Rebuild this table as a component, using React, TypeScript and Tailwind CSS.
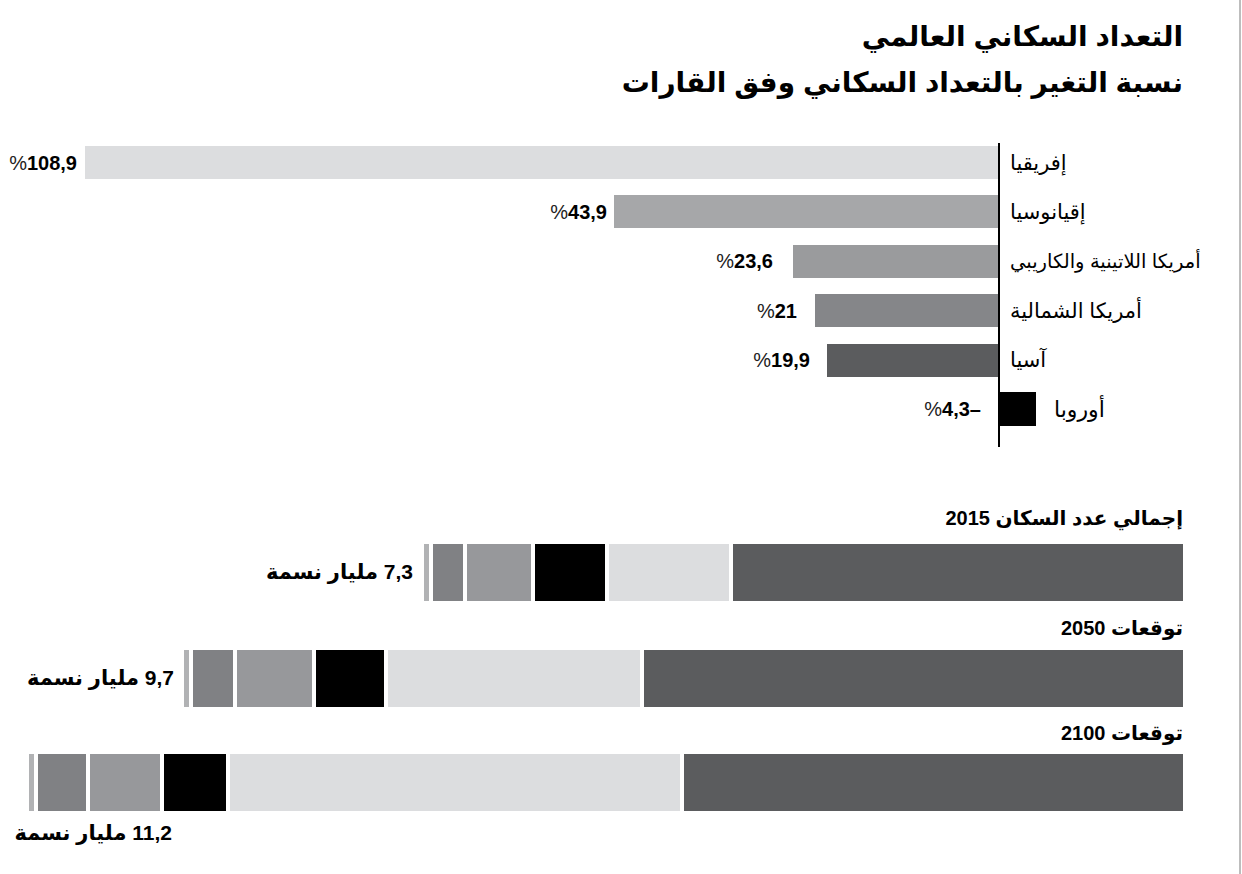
const font = { fontFamily: '"Liberation Sans", "DejaVu Sans", sans-serif' };

type Row = {
  name: string;
  value: string;
  bar: number;
  gap: number;
  color: string;
  small?: boolean;
};

const rows: Row[] = [
  { name: "إفريقيا", value: "108,9", bar: 913, gap: 8, color: "bg-[#dcdddf]" },
  { name: "إقيانوسيا", value: "43,9", bar: 384, gap: 7, color: "bg-[#a6a7a9]" },
  { name: "أمريكا اللاتينية والكاريبي", value: "23,6", bar: 205, gap: 20, color: "bg-[#9a9b9d]", small: true },
  { name: "أمريكا الشمالية", value: "21", bar: 183, gap: 18, color: "bg-[#858689]" },
  { name: "آسيا", value: "19,9", bar: 171, gap: 17, color: "bg-[#5b5c5e]" },
];

// widths from left to right: oceania, north america, latin america, europe, africa, asia
const stacks = [
  { label: "إجمالي عدد السكان 2015", total: "7,3 مليار نسمة", widths: [5, 30, 64, 70, 120, 450] },
  { label: "توقعات 2050", total: "9,7 مليار نسمة", widths: [5, 40, 75, 68, 252, 539] },
  { label: "توقعات 2100", total: "11,2 مليار نسمة", widths: [5, 48, 70, 62, 450, 499] },
];

const stackColors = [
  "bg-[#b1b2b4]",
  "bg-[#808184]",
  "bg-[#97989b]",
  "bg-black",
  "bg-[#dcdddf]",
  "bg-[#5b5c5e]",
];

export default function App() {
  return (
    <div
      className="h-[874px] w-[1241px] overflow-hidden border-r-2 border-[#bdbdbd] bg-white pr-[56px] text-black"
      style={font}
    >
      <div dir="rtl" className="pt-[14px] text-[28px] font-bold leading-[46px]">
        <h1>التعداد السكاني العالمي</h1>
        <h2>نسبة التغير بالتعداد السكاني وفق القارات</h2>
      </div>

      <div className="mt-[37px] flex">
        <div className="flex w-[998px] flex-col gap-[16.4px] pb-[21px] pt-[3px]">
          {rows.map((row) => (
            <div key={row.name} className="flex h-[33px] items-center justify-end">
              <Value text={row.value} />
              <div className={`h-[33px] ${row.color}`} style={{ width: row.bar, marginLeft: row.gap }} />
            </div>
          ))}
          <div className="flex h-[33px] items-center justify-end pr-[17px]">
            <Value text="4,3–" />
          </div>
        </div>

        <div className="w-[2px] bg-black" />

        <div className="flex min-w-0 flex-1 flex-col gap-[16.4px] pt-[3px]">
          {rows.map((row) => (
            <div
              key={row.name}
              dir="rtl"
              className={`flex h-[33px] items-center justify-end whitespace-nowrap pl-[10px] ${
                row.small ? "text-[19.5px]" : "text-[21px]"
              }`}
            >
              <span className="shrink-0">{row.name}</span>
            </div>
          ))}
          <div className="flex h-[33px] items-center">
            <div className="h-[34px] w-[36px] bg-black" />
            <span dir="rtl" className="ml-[18px] text-[22px]">
              أوروبا
            </span>
          </div>
        </div>
      </div>

      <div className="mt-[57px]">
        <Label text={stacks[0].label} />
        <div className="mt-[12px] flex items-center justify-end">
          <Total text={stacks[0].total} />
          <Stack widths={stacks[0].widths} className="ml-[11px]" />
        </div>

        <div className="mt-[13px]">
          <Label text={stacks[1].label} />
        </div>
        <div className="mt-[8px] flex items-center justify-end">
          <Total text={stacks[1].total} />
          <Stack widths={stacks[1].widths} className="ml-[10px]" />
        </div>

        <div className="mt-[12px]">
          <Label text={stacks[2].label} />
        </div>
        <div className="mt-[7px] flex justify-end">
          <Stack widths={stacks[2].widths} />
        </div>
        <div className="mt-[8px] w-[172px]">
          <Total text={stacks[2].total} />
        </div>
      </div>
    </div>
  );
}

function Value({ text }: { text: string }) {
  return (
    <span dir="ltr" className="whitespace-nowrap text-[20px] leading-none">
      <span className="font-light text-[#222]">%</span>
      <span className="font-bold">{text}</span>
    </span>
  );
}

function Label({ text }: { text: string }) {
  return (
    <p dir="rtl" className="h-[28px] text-[20px] font-bold leading-[28px]">
      {text}
    </p>
  );
}

function Total({ text }: { text: string }) {
  return (
    <p dir="rtl" className="h-[28px] whitespace-nowrap text-[21px] font-bold leading-[28px]">
      {text}
    </p>
  );
}

function Stack({ widths, className = "" }: { widths: number[]; className?: string }) {
  return (
    <div className={`flex h-[57px] gap-[4px] ${className}`}>
      {widths.map((w, i) => (
        <div key={i} className={`h-full ${stackColors[i]}`} style={{ width: w }} />
      ))}
    </div>
  );
}
